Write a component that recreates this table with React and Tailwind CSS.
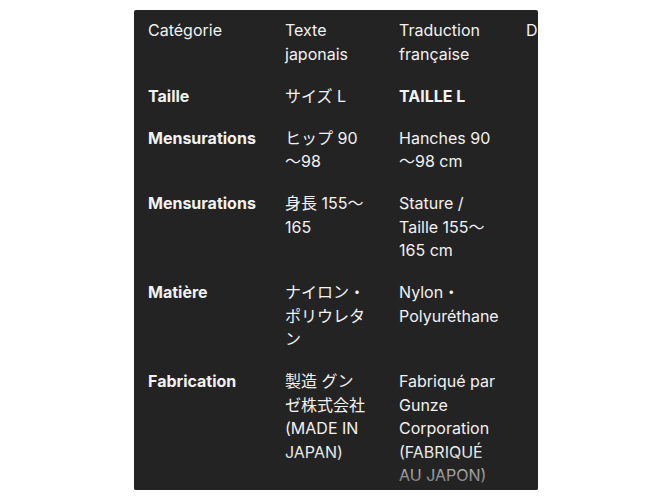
import React from "react";

const rows = [
  { cat: "Taille", jp: "サイズ L", fr: "TAILLE L", frBold: true },
  { cat: "Mensurations", jp: "ヒップ 90 〜98", fr: "Hanches 90 〜98 cm" },
  { cat: "Mensurations", jp: "身長 155〜 165", fr: "Stature / Taille 155〜 165 cm" },
  { cat: "Matière", jp: "ナイロン・ポリウレタン", fr: "Nylon・ Polyuréthane" },
  { cat: "Fabrication", jp: "製造 グンゼ株式会社 (MADE IN JAPAN)", fr: "Fabriqué par Gunze Corporation (FABRIQUÉ AU JAPON)" },
];

const cell = "pt-[9px] pb-[9.5px] pr-[24px]";
const jpCell = "pt-[9px] pb-[9.5px] pr-[32px]";

export default function App() {
  return (
    <div className="w-[670px] h-[500px] bg-white pt-[10px] pl-[134px]">
      <div
        className="relative w-[404px] h-[480px] bg-[#232323] overflow-hidden rounded-[2px] text-[16px] leading-[23.5px] text-[#f2f2f2]"
        style={{ fontFamily: 'Inter, "Noto Sans CJK JP", sans-serif' }}
      >
        <div className="grid grid-cols-[137px_114px_127px_200px] pl-[14px] w-[600px]">
          <div className={cell}>Catégorie</div>
          <div className={jpCell}>Texte japonais</div>
          <div className={cell}>Traduction française</div>
          <div className={cell + " whitespace-nowrap"}>Détails</div>
          {rows.map((r, i) => (
            <React.Fragment key={i}>
              <div className={cell + " font-bold"}>{r.cat}</div>
              <div className={jpCell}>{r.jp}</div>
              <div className={cell + (r.frBold ? " font-bold" : "")}>{r.fr}</div>
              <div className={cell}></div>
            </React.Fragment>
          ))}
        </div>
        <div className="pointer-events-none absolute left-0 right-0 bottom-0 h-[40px] bg-gradient-to-b from-[#23232300] to-[#232323b0]" />
      </div>
    </div>
  );
}
